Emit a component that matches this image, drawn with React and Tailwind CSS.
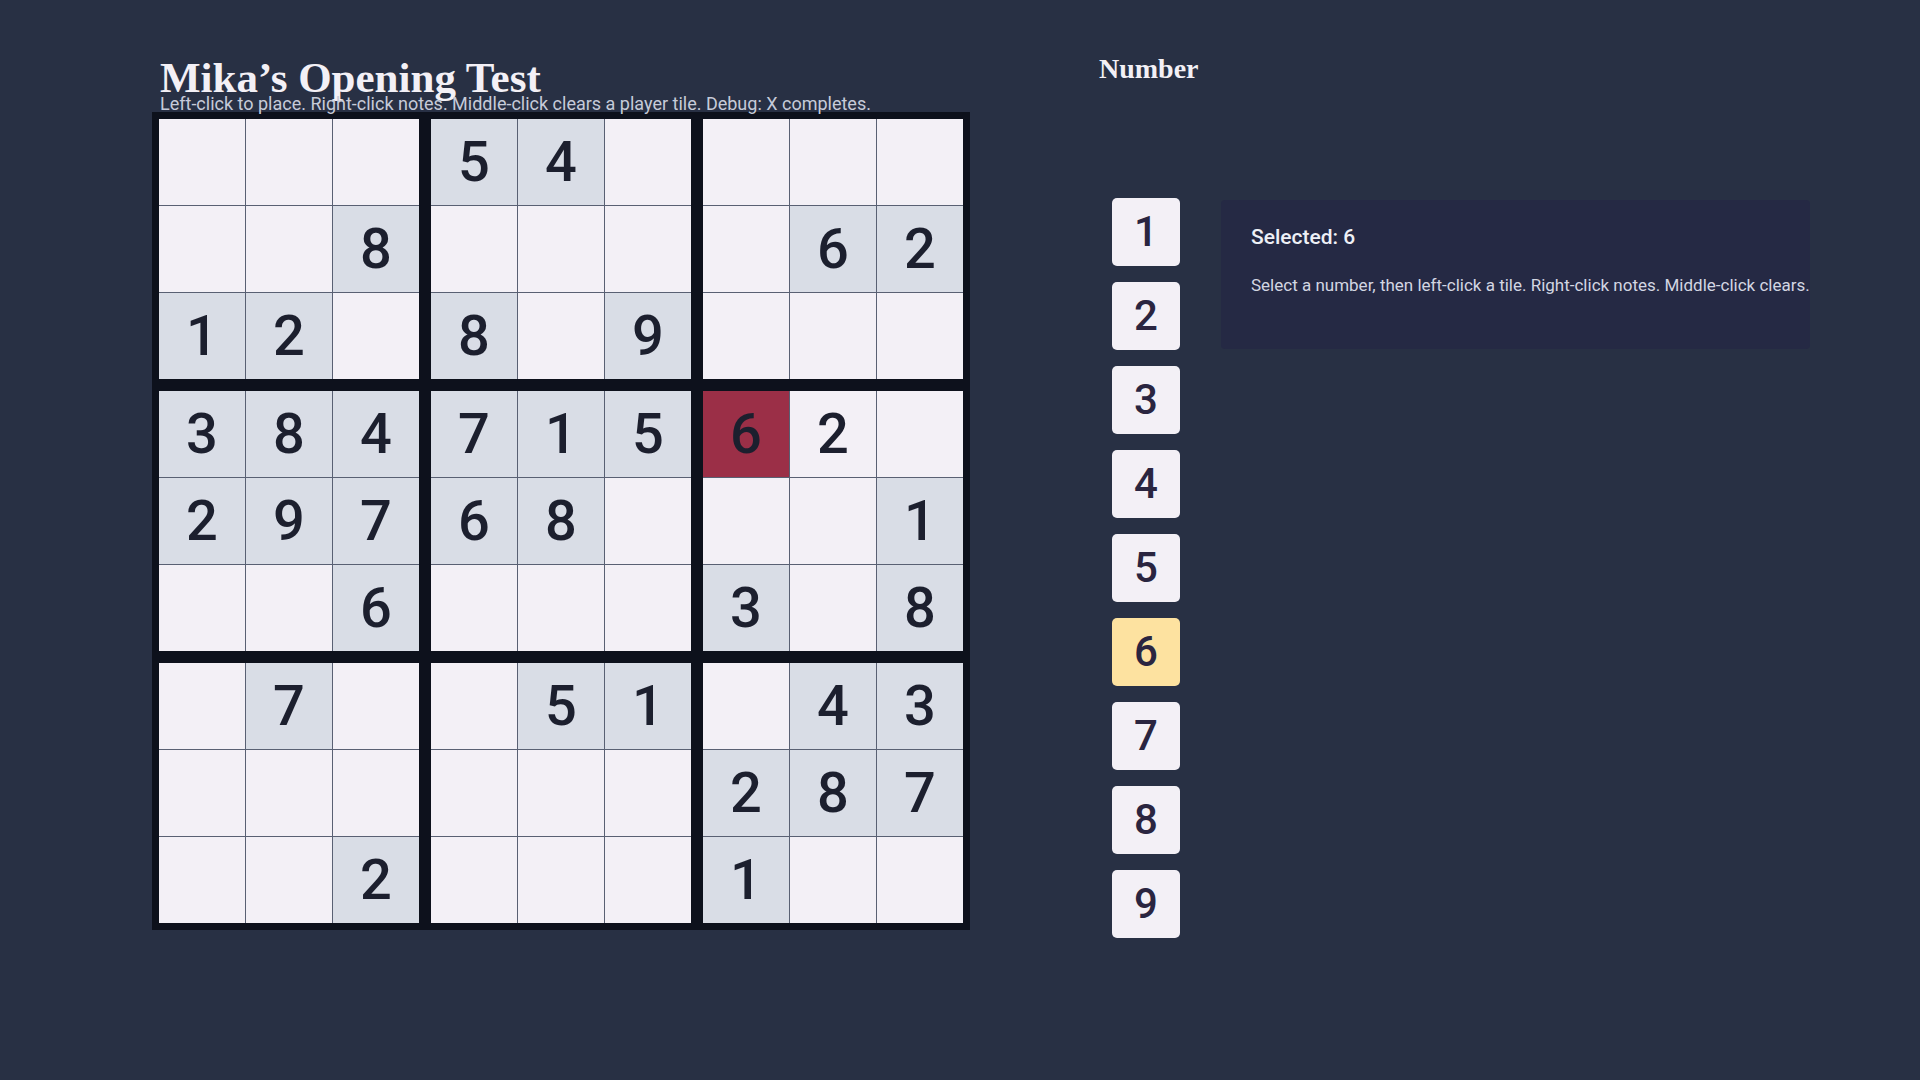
import React from "react";

const serif = { fontFamily: '"Liberation Serif", "DejaVu Serif", serif' };
const sans = { fontFamily: 'Roboto, "Noto Sans", sans-serif' };

// 0 = empty, given digits shown on grey tiles
const GIVEN = [
  [0, 0, 0, 5, 4, 0, 0, 0, 0],
  [0, 0, 8, 0, 0, 0, 0, 6, 2],
  [1, 2, 0, 8, 0, 9, 0, 0, 0],
  [3, 8, 4, 7, 1, 5, 0, 0, 0],
  [2, 9, 7, 6, 8, 0, 0, 0, 1],
  [0, 0, 6, 0, 0, 0, 3, 0, 8],
  [0, 7, 0, 0, 5, 1, 0, 4, 3],
  [0, 0, 0, 0, 0, 0, 2, 8, 7],
  [0, 0, 2, 0, 0, 0, 1, 0, 0],
];

// player-placed tiles
const PLAYER = {
  "3-6": { value: 6, conflict: true },
  "3-7": { value: 2, conflict: false },
};

const Cell = ({ row, col }) => {
  const given = GIVEN[row][col];
  const player = PLAYER[`${row}-${col}`];

  let bg = "bg-[#f3f0f6]";
  if (given) bg = "bg-[#d9dde6]";
  if (player?.conflict) bg = "bg-[#9b2f47]";

  const value = given || player?.value;

  return (
    <div
      className={`${bg} w-[86px] h-[86px] flex items-center justify-center text-[56px] font-medium text-[#1c1f2e] leading-none`}
      style={sans}
    >
      {value || ""}
    </div>
  );
};

const Box = ({ boxRow, boxCol }) => {
  const cells = [];
  for (let r = 0; r < 3; r++) {
    for (let c = 0; c < 3; c++) {
      cells.push(
        <Cell
          key={`${r}-${c}`}
          row={boxRow * 3 + r}
          col={boxCol * 3 + c}
        />
      );
    }
  }

  return (
    <div className="grid grid-cols-3 gap-px bg-[#596073]">
      {cells}
    </div>
  );
};

const Board = () => {
  const boxes = [];
  for (let br = 0; br < 3; br++) {
    for (let bc = 0; bc < 3; bc++) {
      boxes.push(<Box key={`${br}-${bc}`} boxRow={br} boxCol={bc} />);
    }
  }

  return (
    <div className="bg-[#0d111c] p-[7px] w-fit">
      <div className="grid grid-cols-3 gap-3">{boxes}</div>
    </div>
  );
};

const App = () => {
  const selected = 6;

  return (
    <div className="min-h-screen w-full bg-[#283044] flex items-start">
      {/* Left: title + board */}
      <div className="pl-[152px] pt-[56px]">
        <div className="pl-2">
          <h1
            className="text-[43px] leading-[44px] font-bold text-[#f3f0f6]"
            style={serif}
          >
            Mika’s Opening Test
          </h1>
          <p
            className="-mt-[4px] text-[18px] leading-4 text-[#c6cbd9] whitespace-nowrap"
            style={sans}
          >
            Left-click to place. Right-click notes. Middle-click clears a
            player tile. Debug: X completes.
          </p>
        </div>

        <Board />
      </div>

      {/* Right: number picker */}
      <div className="ml-[129px] pt-[53px]">
        <h2
          className="text-[28px] leading-8 font-bold text-[#f3f0f6]"
          style={serif}
        >
          Number
        </h2>

        <div className="mt-[113px] flex items-start">
          <div className="ml-[13px] flex flex-col gap-4">
            {[1, 2, 3, 4, 5, 6, 7, 8, 9].map((n) => (
              <button
                key={n}
                className={`w-[68px] h-[68px] rounded-[5px] flex items-center justify-center text-[42px] leading-none font-medium text-[#2a2540] ${
                  n === selected ? "bg-[#fde2a0]" : "bg-[#f3f0f6]"
                }`}
                style={sans}
              >
                {n}
              </button>
            ))}
          </div>

          <div className="ml-[41px] mt-[2px] w-[589px] h-[149px] rounded-[4px] bg-[#252944] pl-[30px] pt-[25px]">
            <p
              className="text-[21px] leading-6 font-medium text-[#eef0f6]"
              style={sans}
            >
              Selected: {selected}
            </p>
            <p
              className="mt-[26px] text-[17px] leading-5 text-[#d3d6e2] whitespace-nowrap"
              style={sans}
            >
              Select a number, then left-click a tile. Right-click notes.
              Middle-click clears.
            </p>
          </div>
        </div>
      </div>
    </div>
  );
};

export default App;
